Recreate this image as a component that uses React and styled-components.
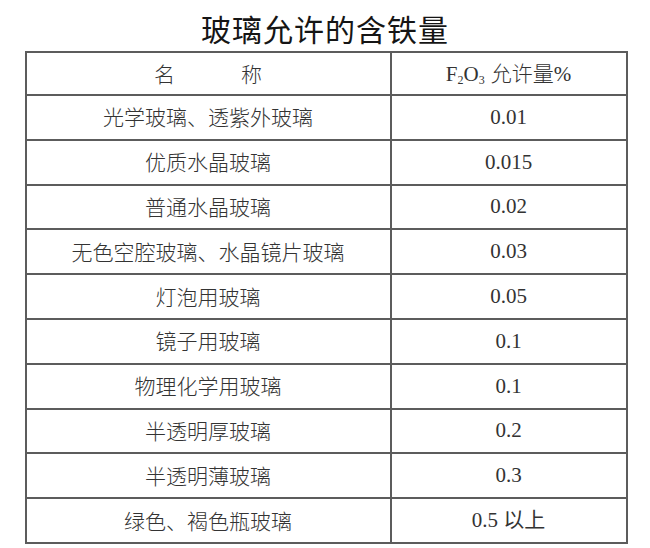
import React from 'react'
import styled, { createGlobalStyle } from 'styled-components'

const GlobalStyle = createGlobalStyle`
  html, body {
    margin: 0;
    padding: 0;
    background: #ffffff;
  }
  body {
    font-family: "Liberation Serif", "Noto Sans CJK SC", serif;
    color: #2b2b2b;
  }
`

const rows = [
  { name: '光学玻璃、透紫外玻璃', value: '0.01' },
  { name: '优质水晶玻璃', value: '0.015' },
  { name: '普通水晶玻璃', value: '0.02' },
  { name: '无色空腔玻璃、水晶镜片玻璃', value: '0.03' },
  { name: '灯泡用玻璃', value: '0.05' },
  { name: '镜子用玻璃', value: '0.1' },
  { name: '物理化学用玻璃', value: '0.1' },
  { name: '半透明厚玻璃', value: '0.2' },
  { name: '半透明薄玻璃', value: '0.3' },
  { name: '绿色、褐色瓶玻璃', value: '0.5 以上' },
]

const Page = styled.div`
  width: 650px;
  height: 548px;
  display: flex;
  flex-direction: column;
  align-items: center;
  overflow: hidden;
`

const Title = styled.h1`
  margin: 0;
  height: 51px;
  display: flex;
  align-items: center;
  padding-top: 4px;
  box-sizing: border-box;
  font-family: "Noto Sans CJK SC", sans-serif;
  font-weight: 400;
  font-size: 30px;
  letter-spacing: 1px;
  color: #151515;
`

const Table = styled.table`
  width: 603px;
  margin-left: 2px;
  border-collapse: collapse;
  table-layout: fixed;
  border: 2px solid #5c5c5c;
`

const Row = styled.tr`
  height: ${(p) => (p.$head ? '43px' : '44.8px')};
`

const Cell = styled.td`
  border: 2px solid #5c5c5c;
  padding: 0;
  text-align: center;
  vertical-align: middle;
  font-size: 20px;
  line-height: 1;
  color: #333333;
  width: ${(p) => (p.$wide ? '363px' : 'auto')};
`

const Spread = styled.span`
  display: inline-flex;
  gap: 66px;
`

const Formula = styled.span`
  font-family: "Liberation Serif", serif;
  font-size: 21px;
  sub {
    font-size: 12px;
    vertical-align: -3px;
  }
`

const Unit = styled.span`
  font-family: "Noto Sans CJK SC", sans-serif;
  font-weight: 300;
  font-size: 21px;
  margin-left: 6px;
`

const Percent = styled.span`
  font-family: "Liberation Serif", serif;
  font-size: 21px;
`

const Name = styled.span`
  font-family: "Noto Sans CJK SC", sans-serif;
  font-weight: 300;
  font-size: 21px;
`

const Value = styled.span`
  font-family: "Liberation Serif", "Noto Sans CJK SC", serif;
  font-size: 21px;
`

export default function App() {
  return (
    <Page>
      <GlobalStyle />
      <Title>玻璃允许的含铁量</Title>
      <Table>
        <tbody>
          <Row $head>
            <Cell $wide>
              <Spread>
                <Name>名</Name>
                <Name>称</Name>
              </Spread>
            </Cell>
            <Cell>
              <Formula>
                F<sub>2</sub>O<sub>3</sub>
              </Formula>
              <Unit>允许量</Unit>
              <Percent>%</Percent>
            </Cell>
          </Row>
          {rows.map((r, i) => (
            <Row key={i}>
              <Cell $wide>
                <Name>{r.name}</Name>
              </Cell>
              <Cell>
                <Value>{r.value}</Value>
              </Cell>
            </Row>
          ))}
        </tbody>
      </Table>
    </Page>
  )
}
